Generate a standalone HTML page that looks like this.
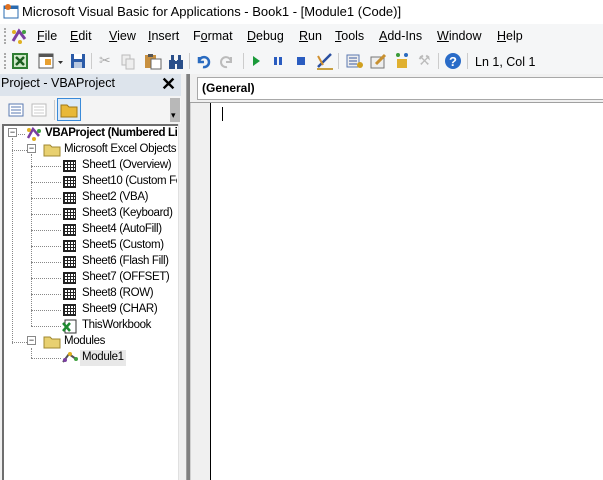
<!DOCTYPE html>
<html><head><meta charset="utf-8"><style>
*{margin:0;padding:0;box-sizing:border-box}
body{width:603px;height:480px;overflow:hidden;background:#fff;font-family:"Liberation Sans",sans-serif;font-size:12px;color:#000;position:relative}
.a{position:absolute}
.menu span{position:absolute;top:29px;font-size:12.5px}
.menu u{text-decoration:underline}
.clip{position:absolute;left:0;top:0;width:177px;height:480px;overflow:hidden}
.tree div{position:absolute;font-size:11.5px;letter-spacing:-0.35px;white-space:nowrap;font-family:"Liberation Sans",sans-serif}
.sh{position:absolute;width:13px;height:12px;border:1px solid #222;background:repeating-linear-gradient(90deg,#222 0 1px,transparent 1px 3px),repeating-linear-gradient(0deg,#222 0 1px,#fff 1px 3px)}
</style></head><body>
<div class="a" style="left:0;top:0;width:603px;height:24px;background:#fff"></div>
<svg class="a" style="left:3px;top:3px" width="16" height="16"><rect x="1" y="3" width="14" height="12" fill="#fff" stroke="#2a6bb0"/><rect x="1" y="3" width="14" height="3" fill="#2a6bb0"/><circle cx="5" cy="4" r="3" fill="#e07020"/></svg>
<div class="a" style="left:22px;top:4px;font-size:13px">Microsoft Visual Basic for Applications - Book1 - [Module1 (Code)]</div>
<div class="a" style="left:0;top:24px;width:603px;height:25px;background:#f5f6f7"></div>
<div class="a" style="left:4px;top:28px;width:2px;height:16px;border-left:2px dotted #aaa"></div>
<svg class="a" style="left:10px;top:27px" width="18" height="18"><path d="M3 14 L9 4 L15 12" stroke="#7a3fa0" stroke-width="3" fill="none"/><circle cx="4" cy="5" r="2" fill="#e0b020"/><circle cx="14" cy="5" r="2" fill="#40a040"/><circle cx="10" cy="15" r="2" fill="#e0b020"/></svg>
<div class="menu">
<span style="left:37px"><u>F</u>ile</span><span style="left:70px"><u>E</u>dit</span><span style="left:109px"><u>V</u>iew</span><span style="left:148px"><u>I</u>nsert</span><span style="left:193px">F<u>o</u>rmat</span><span style="left:247px"><u>D</u>ebug</span><span style="left:299px"><u>R</u>un</span><span style="left:335px"><u>T</u>ools</span><span style="left:379px"><u>A</u>dd-Ins</span><span style="left:437px"><u>W</u>indow</span><span style="left:497px"><u>H</u>elp</span>
</div>
<div class="a" style="left:0;top:49px;width:603px;height:25px;background:#f5f6f7"></div>
<div class="a" style="left:4px;top:53px;height:16px;border-left:2px dotted #aaa"></div>
<svg class="a" style="left:11px;top:52px" width="18" height="18"><rect x="1" y="1" width="16" height="16" fill="#2f7d32"/><rect x="3" y="3" width="12" height="12" fill="#cfe8c8"/><path d="M5 5 L13 13 M13 5 L5 13" stroke="#1c5e20" stroke-width="2.5"/></svg>
<svg class="a" style="left:38px;top:53px" width="26" height="16"><rect x="1" y="1" width="14" height="14" fill="#fff" stroke="#555"/><rect x="1" y="1" width="14" height="3" fill="#555"/><rect x="7" y="6" width="6" height="6" fill="#e8a030"/><path d="M20 8 h5 l-2.5 3z" fill="#333"/></svg>
<svg class="a" style="left:70px;top:53px" width="16" height="16"><rect x="1" y="1" width="14" height="14" fill="#2b5ba8"/><rect x="4" y="1" width="8" height="5" fill="#fff"/><rect x="4" y="9" width="8" height="6" fill="#b8c8e0"/></svg>
<div class="a" style="left:91px;top:53px;width:1px;height:16px;background:#ccc"></div>
<div class="a" style="left:99px;top:52px;color:#aaa;font-size:14px">✂</div>
<svg class="a" style="left:120px;top:54px" width="16" height="16"><rect x="2" y="1" width="8" height="10" fill="#eee" stroke="#bbb"/><rect x="6" y="5" width="8" height="10" fill="#eee" stroke="#bbb"/></svg>
<svg class="a" style="left:144px;top:53px" width="18" height="17"><rect x="1" y="2" width="11" height="13" fill="#c89040"/><rect x="7" y="6" width="10" height="10" fill="#fff" stroke="#666"/><rect x="4" y="1" width="5" height="3" fill="#555"/></svg>
<svg class="a" style="left:168px;top:54px" width="16" height="16"><rect x="1" y="6" width="6" height="9" fill="#2a4f8a"/><rect x="9" y="6" width="6" height="9" fill="#2a4f8a"/><rect x="3" y="1" width="3" height="6" fill="#2a4f8a"/><rect x="10" y="1" width="3" height="6" fill="#2a4f8a"/><rect x="6" y="7" width="4" height="3" fill="#2a4f8a"/></svg>
<div class="a" style="left:189px;top:53px;width:1px;height:16px;background:#ccc"></div>
<svg class="a" style="left:195px;top:53px" width="16" height="16"><path d="M4 4 v5 h5 M4 9 A5 5 0 1 1 8 14" stroke="#2a6bc0" stroke-width="2.5" fill="none"/></svg>
<svg class="a" style="left:219px;top:53px" width="16" height="16"><path d="M12 4 v5 h-5 M12 9 A5 5 0 1 0 8 14" stroke="#bbb" stroke-width="2" fill="none"/></svg>
<div class="a" style="left:243px;top:53px;width:1px;height:16px;background:#ccc"></div>
<svg class="a" style="left:250px;top:55px" width="12" height="12"><path d="M3 1 L10 6 L3 11z" fill="#1a9a3a"/></svg>
<svg class="a" style="left:272px;top:55px" width="12" height="12"><rect x="2" y="2" width="3" height="8" fill="#2a5cc0"/><rect x="7" y="2" width="3" height="8" fill="#2a5cc0"/></svg>
<svg class="a" style="left:295px;top:55px" width="12" height="12"><rect x="2" y="2" width="8" height="8" fill="#2a5cc0"/></svg>
<svg class="a" style="left:315px;top:51px" width="20" height="20"><path d="M2 17 h16 v2 H2z" fill="#c8a040"/><path d="M3 16 L16 3" stroke="#2a4fa0" stroke-width="2.5"/><path d="M3 5 L8 14" stroke="#d09030" stroke-width="2"/></svg>
<div class="a" style="left:338px;top:53px;width:1px;height:16px;background:#ccc"></div>
<svg class="a" style="left:345px;top:52px" width="20" height="18"><rect x="2" y="3" width="12" height="12" fill="#eee" stroke="#5a78b0"/><path d="M4 6 h8 M4 9 h8 M4 12 h8" stroke="#3a5aa0"/><circle cx="15" cy="13" r="3" fill="#d0a020"/></svg>
<svg class="a" style="left:370px;top:52px" width="18" height="18"><rect x="1" y="5" width="13" height="11" fill="#eee" stroke="#777"/><path d="M6 12 L15 3" stroke="#c89030" stroke-width="3"/></svg>
<svg class="a" style="left:393px;top:51px" width="18" height="19"><rect x="4" y="8" width="10" height="9" fill="#e0b030"/><circle cx="5" cy="4" r="2" fill="#3a9a3a"/><circle cx="13" cy="4" r="2" fill="#2a6bc0"/></svg>
<div class="a" style="left:418px;top:52px;color:#bbb;font-size:14px">⚒</div>
<div class="a" style="left:438px;top:53px;width:1px;height:16px;background:#ccc"></div>
<svg class="a" style="left:444px;top:52px" width="18" height="18"><circle cx="9" cy="9" r="8" fill="#2a6cc8"/><text x="9" y="14" text-anchor="middle" font-size="13" font-weight="bold" fill="#fff" font-family="Liberation Sans">?</text></svg>
<div class="a" style="left:467px;top:53px;width:1px;height:16px;background:#ccc"></div>
<div class="a" style="left:475px;top:55px;font-size:12.5px">Ln 1, Col 1</div>
<div class="a" style="left:0;top:74px;width:186px;height:406px;background:#f0f0f0"></div>
<div class="a" style="left:0;top:74px;width:181px;height:22px;background:#dde4ec"></div>
<div class="a" style="left:1px;top:76px;font-size:12.5px">Project - VBAProject</div>
<div class="a" style="left:161px;top:74px;font-size:18px;font-weight:bold;line-height:20px">✕</div>
<div class="a" style="left:0;top:96px;width:181px;height:28px;background:#f4f4f4"></div>
<svg class="a" style="left:8px;top:102px" width="16" height="16"><rect x="1" y="2" width="14" height="12" fill="#fff" stroke="#5a7ab0"/><path d="M3 5 h10 M3 8 h10 M3 11 h10" stroke="#5a7ab0"/></svg>
<svg class="a" style="left:31px;top:102px" width="16" height="16"><rect x="1" y="2" width="14" height="12" fill="#fff" stroke="#bbb"/><path d="M3 5 h10 M3 8 h10 M3 11 h10" stroke="#ccc"/></svg>
<div class="a" style="left:54px;top:100px;width:1px;height:20px;background:#ccc"></div>
<div class="a" style="left:57px;top:98px;width:24px;height:23px;border:1px solid #3a8ad8;background:#dceaf8"></div>
<svg class="a" style="left:60px;top:102px" width="18" height="16"><path d="M1 3 h6 l2 2 h8 v10 H1z" fill="#e8b838" stroke="#a07818"/></svg>
<div class="a" style="left:170px;top:98px;width:10px;height:24px;background:#b8b8b8"></div>
<div class="a" style="left:171px;top:110px;font-size:9px">▾</div>
<div class="a" style="left:2px;top:124px;width:176px;height:356px;background:#fff;border-left:2px solid #6e6e6e;border-top:2px solid #6e6e6e"></div>
<div class="a" style="left:178px;top:124px;width:8px;height:356px;background:#f0f0f0;border-left:1px solid #e0e0e0"></div>
<div class="a" style="left:12px;top:138px;height:206px;border-left:1px dotted #888"></div>
<div class="a" style="left:18px;top:134px;width:7px;border-top:1px dotted #888"></div>
<div class="a" style="left:12px;top:150px;width:15px;border-top:1px dotted #888"></div>
<div class="a" style="left:12px;top:342px;width:15px;border-top:1px dotted #888"></div>
<div class="a" style="left:31px;top:154px;height:172px;border-left:1px dotted #888"></div>
<div class="a" style="left:31px;top:348px;height:10px;border-left:1px dotted #888"></div>
<div class="a" style="left:31px;top:358px;width:30px;border-top:1px dotted #888"></div>
<div class="a" style="left:31px;top:166px;width:30px;border-top:1px dotted #888"></div>
<div class="a" style="left:31px;top:182px;width:30px;border-top:1px dotted #888"></div>
<div class="a" style="left:31px;top:198px;width:30px;border-top:1px dotted #888"></div>
<div class="a" style="left:31px;top:214px;width:30px;border-top:1px dotted #888"></div>
<div class="a" style="left:31px;top:230px;width:30px;border-top:1px dotted #888"></div>
<div class="a" style="left:31px;top:246px;width:30px;border-top:1px dotted #888"></div>
<div class="a" style="left:31px;top:262px;width:30px;border-top:1px dotted #888"></div>
<div class="a" style="left:31px;top:278px;width:30px;border-top:1px dotted #888"></div>
<div class="a" style="left:31px;top:294px;width:30px;border-top:1px dotted #888"></div>
<div class="a" style="left:31px;top:310px;width:30px;border-top:1px dotted #888"></div>
<div class="a" style="left:31px;top:326px;width:30px;border-top:1px dotted #888"></div>
<div class="clip tree">
<div style="left:8px;top:128px;width:9px;height:9px;border:1px solid #888;background:#fff;font-size:9px;line-height:7px;text-align:center;letter-spacing:0">−</div>
<svg class="a" style="left:25px;top:126px" width="18" height="16"><path d="M3 12 L8 3 L14 10" stroke="#7a3fa0" stroke-width="2.5" fill="none"/><circle cx="4" cy="4" r="2" fill="#e0b020"/><circle cx="14" cy="5" r="2" fill="#40a040"/><circle cx="9" cy="13" r="2" fill="#e0b020"/></svg>
<div style="left:45px;top:127px;font-weight:bold">VBAProject (Numbered Lists)</div>
<div style="left:27px;top:144px;width:9px;height:9px;border:1px solid #888;background:#fff;font-size:9px;line-height:7px;text-align:center;letter-spacing:0">−</div>
<svg class="a" style="left:43px;top:143px" width="18" height="14"><path d="M1 2 h6 l2 2 h8 v9 H1z" fill="#e8d070" stroke="#a08830"/></svg>
<div style="left:64px;top:143px">Microsoft Excel Objects</div>
<div style="left:82px;top:159px">Sheet1 (Overview)</div>
<div style="left:82px;top:175px">Sheet10 (Custom Format)</div>
<div style="left:82px;top:191px">Sheet2 (VBA)</div>
<div style="left:82px;top:207px">Sheet3 (Keyboard)</div>
<div style="left:82px;top:223px">Sheet4 (AutoFill)</div>
<div style="left:82px;top:239px">Sheet5 (Custom)</div>
<div style="left:82px;top:255px">Sheet6 (Flash Fill)</div>
<div style="left:82px;top:271px">Sheet7 (OFFSET)</div>
<div style="left:82px;top:287px">Sheet8 (ROW)</div>
<div style="left:82px;top:303px">Sheet9 (CHAR)</div>
<div style="left:82px;top:319px">ThisWorkbook</div>
<div style="left:27px;top:336px;width:9px;height:9px;border:1px solid #888;background:#fff;font-size:9px;line-height:7px;text-align:center;letter-spacing:0">−</div>
<svg class="a" style="left:43px;top:335px" width="18" height="14"><path d="M1 2 h6 l2 2 h8 v9 H1z" fill="#e8d070" stroke="#a08830"/></svg>
<div style="left:64px;top:335px">Modules</div>
<div style="left:80px;top:350px;width:46px;height:16px;background:#e8e8e8"></div>
<div style="left:82px;top:351px">Module1</div>
</div>
<div class="sh" style="left:63px;top:160px"></div><div class="sh" style="left:63px;top:176px"></div><div class="sh" style="left:63px;top:192px"></div><div class="sh" style="left:63px;top:208px"></div><div class="sh" style="left:63px;top:224px"></div><div class="sh" style="left:63px;top:240px"></div><div class="sh" style="left:63px;top:256px"></div><div class="sh" style="left:63px;top:272px"></div><div class="sh" style="left:63px;top:288px"></div><div class="sh" style="left:63px;top:304px"></div>
<svg class="a" style="left:62px;top:319px" width="16" height="15"><rect x="3" y="1" width="11" height="13" fill="#fff" stroke="#333"/><path d="M1 4 L8 12 M8 4 L1 12" stroke="#1f8a30" stroke-width="2.5"/></svg>
<svg class="a" style="left:61px;top:350px" width="18" height="15"><path d="M2 12 L8 4 L15 9" stroke="#555" stroke-width="2" fill="none"/><circle cx="4" cy="10" r="2" fill="#7a3fa0"/><circle cx="9" cy="4" r="2" fill="#e0b020"/><circle cx="15" cy="9" r="2" fill="#40a040"/></svg>
<div class="a" style="left:186px;top:74px;width:4px;height:406px;background:#808080;border-left:1px solid #a0a0a0"></div>
<div class="a" style="left:190px;top:74px;width:413px;height:406px;background:#f0f0f0"></div>
<div class="a" style="left:197px;top:77px;width:406px;height:23px;background:#fff;border:1px solid #a8a8a8;border-right:none"></div>
<div class="a" style="left:202px;top:81px;font-size:12px;font-weight:bold">(General)</div>
<div class="a" style="left:190px;top:102px;width:413px;height:1px;background:#a0a0a0"></div>
<div class="a" style="left:190px;top:103px;width:20px;height:377px;background:#f0f0f0;border-left:1px solid #d0d0d0"></div>
<div class="a" style="left:210px;top:103px;width:1px;height:377px;background:#000"></div>
<div class="a" style="left:211px;top:103px;width:392px;height:377px;background:#fff"></div>
<div class="a" style="left:222px;top:107px;width:1px;height:14px;background:#000"></div>
</body></html>
